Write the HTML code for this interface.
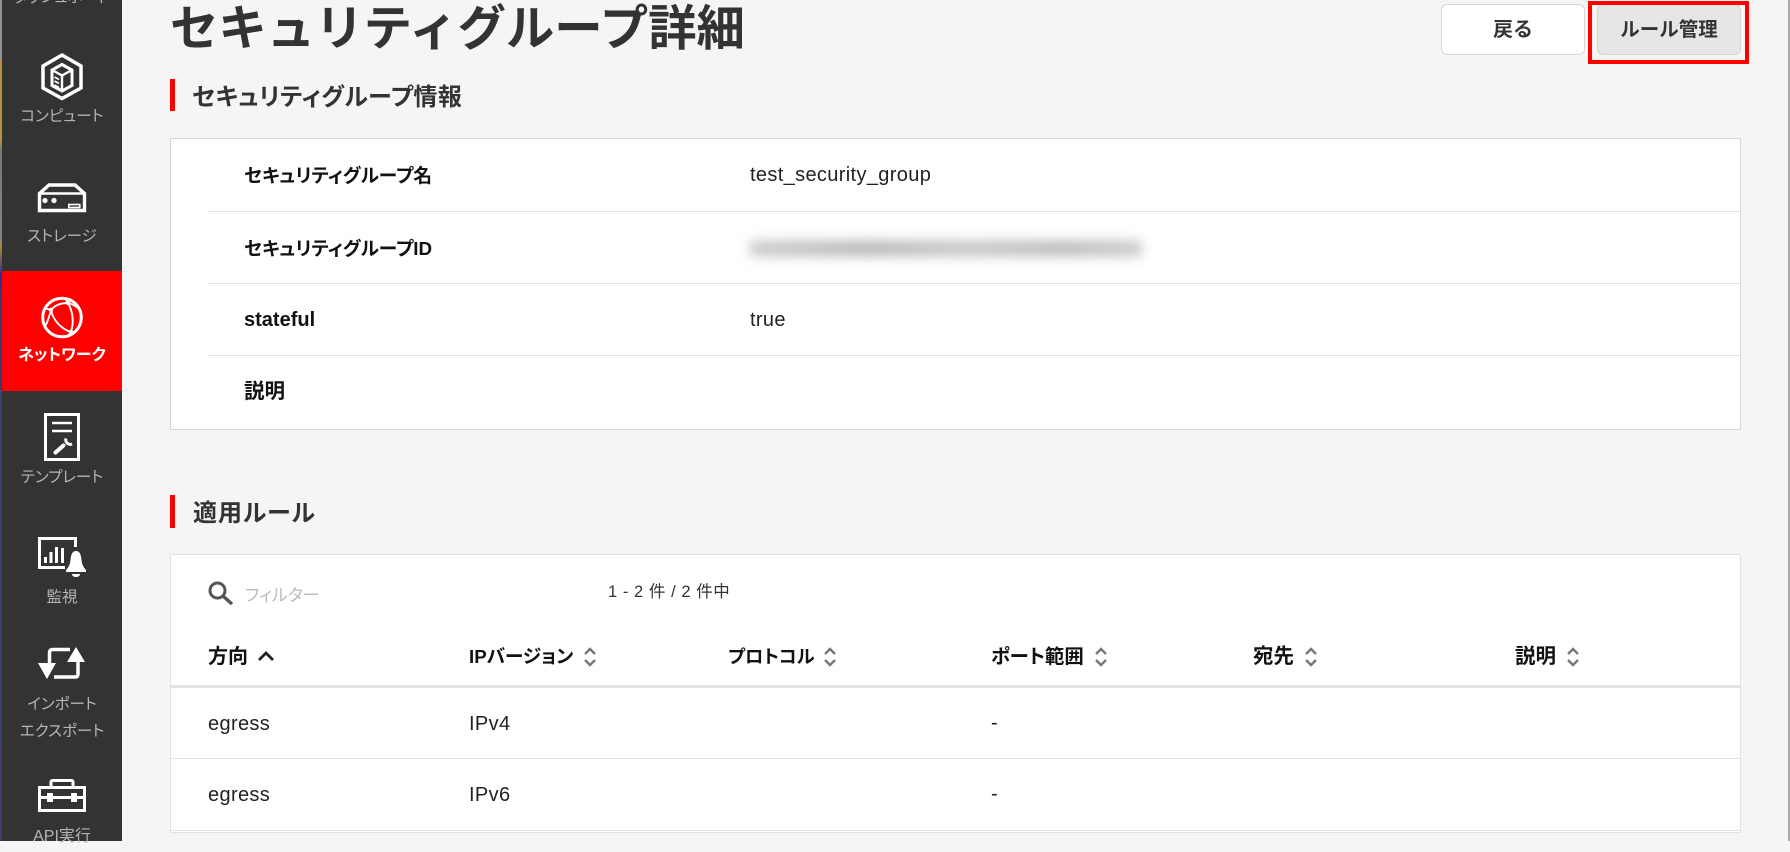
<!DOCTYPE html>
<html lang="ja"><head><meta charset="utf-8"><title>セキュリティグループ詳細</title>
<style>
html,body{margin:0;padding:0}
body{width:1790px;height:841px;overflow:hidden;position:relative;background:#f5f5f5;font-family:"Liberation Sans","Noto Sans CJK JP",sans-serif;color:#111}
.a{position:absolute;white-space:nowrap}
.t{position:absolute;white-space:nowrap;line-height:30px;height:30px}
.p{font-feature-settings:"palt"}
.s{color:#b4b4b4;font-size:15.5px;width:120px;left:2px;text-align:center;font-feature-settings:"palt"}
.b{font-weight:700;font-size:18.8px;font-feature-settings:"palt"}
.h{font-weight:700;font-size:18px;font-feature-settings:"palt";color:#111}
.v{font-size:20px;letter-spacing:.35px;color:#222}
.r{background:#e3e3e3;height:1px}
</style></head><body>
<div class="a" style="left:0;top:0;width:2px;height:841px;background:linear-gradient(#8d9296 0,#8d9296 60px,#b8923e 60px,#b8923e 140px,#777 150px,#808488 240px,#b58a30 245px,#2d2d90 275px,#36406a 300px,#3a3f6c 841px)"></div>
<div class="a" style="left:2px;top:0;width:120px;height:841px;background:#333"></div>
<div class="a" style="left:2px;top:271px;width:120px;height:120px;background:#f00"></div>
<div class="a" style="left:1788px;top:0;width:2px;height:841px;background:#aaa"></div>
<div class="t s" style="top:-17px">ダッシュボード</div>
<div class="t s" style="top:102px">コンピュート</div>
<div class="t s" style="top:222px">ストレージ</div>
<div class="t s" style="top:341px;color:#fff;font-weight:700;font-size:16px">ネットワーク</div>
<div class="t s" style="top:463px">テンプレート</div>
<div class="t s" style="top:583px">監視</div>
<div class="t s" style="top:690px">インポート</div>
<div class="t s" style="top:717px">エクスポート</div>
<div class="t s" style="top:822px;font-size:16px">API実行</div>
<svg class="a" style="left:0;top:0" width="1790" height="841" viewBox="0 0 1790 841" fill="none" stroke="#fff">
<polygon points="62,55 81,66 81,88 62,98.5 43,88 43,66" stroke-width="3.5"/>
<polygon points="62,64.5 72,70 72,85.5 62,91 52,85.5 52,70" stroke-width="3"/>
<path d="M52,70 62,75.5 72,70M62,75.5V91" stroke-width="2.4"/>
<path d="M54.5,77 59,79.5M54.5,81 59,83.5M54.5,85 59,87.5" stroke-width="1.7"/>
<path d="M39.5,193.5 49,185H75L84.5,193.5V210.5H39.5Z" stroke-width="3.4"/>
<path d="M39,193.5H85" stroke-width="2.5"/>
<circle cx="45" cy="200.5" r="2.6" fill="#fff" stroke="none"/><circle cx="54" cy="200.5" r="2.6" fill="#fff" stroke="none"/>
<rect x="68.8" y="204.5" width="11" height="3" stroke-width="1.6"/>
<circle cx="62" cy="317.5" r="19.3" stroke-width="3"/>
<path d="M51,310C55,305 61,303 68,303M68,303C73,312 74,322 71,332M51,310C53,320 61,329 71,332M68,303C72,304 76,306 80,310M68,303L65,298M51,310L44,308M51,310C50,315 48,320 46,325M71,332L67,337" stroke-width="1.9"/>
<circle cx="51" cy="310" r="2.2" fill="#fff" stroke="none"/><circle cx="68" cy="303" r="2.2" fill="#fff" stroke="none"/><circle cx="71" cy="332" r="2.2" fill="#fff" stroke="none"/>
<rect x="45.5" y="414.5" width="33" height="45" stroke-width="3"/>
<path d="M52,423H72M52,431H72" stroke-width="2.6"/>
<path d="M55.5,452.5 63.5,445.5" stroke-width="4" stroke-linecap="round"/>
<path d="M66,438.5A4.5,4.5 0 0 0 72,444" stroke-width="3"/>
<path d="M65,567.5H39.5V538.5H75.5V547" stroke-width="3"/>
<path d="M44,557H47V563H44ZM49.5,552H52.5V563H49.5ZM55,547H58V563H55ZM61,548H64V563H61Z" fill="#fff" stroke="none"/>
<path d="M76,551C72,551 71,555 70.5,560C70,565 68,568 66,570V572H86V570C84,568 82,565 81.5,560C81,555 80,551 76,551Z M72,574H80C80,576 78,577 76,577C74,577 72,576 72,574Z" fill="#fff" stroke="none"/>
<path d="M70,649.5H53Q49.5,649.5 49.5,653V663M54,677H75Q78,677 78,674V662" stroke-width="3.5"/>
<path d="M38,663H56L47,679ZM67,662H85L76,647Z" fill="#fff" stroke="none"/>
<path d="M39.5,787.5H84.5V810.5H39.5ZM51,787V782Q51,780.5 53,780.5H71Q73,780.5 73,782V787M39,797.5H85" stroke-width="3"/>
<rect x="47" y="793" width="6" height="9" fill="#fff" stroke="none"/><rect x="71" y="793" width="6" height="9" fill="#fff" stroke="none"/>
</svg>

<div class="a" style="left:170px;top:-1px;font-size:48.4px;line-height:60px;font-weight:700;color:#333">セキュリティグループ詳細</div>
<div class="a" style="left:170px;top:79px;width:5px;height:32px;background:#f00"></div>
<div class="a p" style="left:192px;top:82px;font-size:24px;letter-spacing:.5px;line-height:32px;font-weight:700;color:#333">セキュリティグループ情報</div>
<div class="a" style="left:1441px;top:4px;width:142px;height:49px;background:#fff;border:1px solid #d6d6d6;border-radius:6px;text-align:center;line-height:51px;font-size:20px;font-weight:700;color:#333">戻る</div>
<div class="a" style="left:1597px;top:4px;width:142px;height:49px;background:#e6e6e6;border:1px solid #d6d6d6;border-radius:6px;text-align:center;line-height:51px;font-size:19.5px;font-weight:700;color:#333">ルール管理</div>
<div class="a" style="left:1588px;top:1px;width:153px;height:55px;border:4px solid #f00"></div>

<div class="a" style="left:170px;top:138px;width:1569px;height:290px;background:#fff;border:1px solid #d8d8d8"></div>
<div class="a r" style="left:208px;top:211px;width:1532px"></div>
<div class="a r" style="left:208px;top:283px;width:1532px"></div>
<div class="a r" style="left:208px;top:355px;width:1532px"></div>
<div class="t b" style="left:244px;top:161px">セキュリティグループ名</div>
<div class="t b" style="left:244px;top:234px">セキュリティグループID</div>
<div class="t b" style="left:244px;top:305px;font-size:20px">stateful</div>
<div class="t b" style="left:244px;top:377px;font-size:20.5px">説明</div>
<div class="t v" style="left:750px;top:160px">test_security_group</div>
<div class="a" style="left:750px;top:241px;width:392px;height:15px;background:linear-gradient(90deg,#c8c8c8,#b4b4b4 30%,#c4c4c4 55%,#b8b8b8 80%,#c8c8c8);filter:blur(6px)"></div>
<div class="t v" style="left:750px;top:305px">true</div>

<div class="a" style="left:170px;top:495px;width:5px;height:33px;background:#f00"></div>
<div class="a p" style="left:193px;top:498px;font-size:24px;letter-spacing:1px;line-height:32px;font-weight:700;color:#333">適用ルール</div>
<div class="a" style="left:170px;top:554px;width:1569px;height:277px;background:#fff;border:1px solid #e2e2e2"></div>
<svg class="a" style="left:208px;top:581px" width="26" height="24" viewBox="0 0 26 24" fill="none" stroke="#555"><circle cx="9.5" cy="9.5" r="7.5" stroke-width="3"/><path d="M15,15 24,23" stroke-width="3.4"/></svg>
<div class="t p" style="left:245px;top:581px;font-size:17px;color:#bbb">フィルター</div>
<div class="t" style="left:608px;top:577px;font-size:16.5px;letter-spacing:.55px;color:#333">1 - 2 件 / 2 件中</div>

<div class="t h" style="left:208px;top:642px;font-size:20px">方向</div>
<svg class="a" style="left:258px;top:650px" width="16" height="12" viewBox="0 0 16 12" fill="none" stroke="#222" stroke-width="2.8"><path d="M1,10 8,3 15,10"/></svg>
<div class="t h" style="left:469px;top:642px;font-size:18.7px">IPバージョン</div>
<div class="t h" style="left:728px;top:642px;font-size:18.3px">プロトコル</div>
<div class="t h" style="left:991px;top:642px;font-size:19.4px">ポート範囲</div>
<div class="t h" style="left:1253px;top:642px;font-size:20.5px">宛先</div>
<div class="t h" style="left:1515px;top:642px;font-size:20.5px">説明</div>
<svg class="a" style="left:0;top:0" width="1790" height="841" viewBox="0 0 1790 841" fill="none" stroke="#777" stroke-width="2.4">
<path d="M585,654 590,649 595,654M585,660 590,665 595,660"/>
<path d="M825,654 830,649 835,654M825,660 830,665 835,660"/>
<path d="M1096,654 1101,649 1106,654M1096,660 1101,665 1106,660"/>
<path d="M1306,654 1311,649 1316,654M1306,660 1311,665 1316,660"/>
<path d="M1568,654 1573,649 1578,654M1568,660 1573,665 1578,660"/>
</svg>
<div class="a" style="left:171px;top:685px;width:1569px;height:3px;background:#e2e2e2"></div>
<div class="a r" style="left:171px;top:758px;width:1569px"></div>
<div class="a r" style="left:171px;top:830px;width:1569px"></div>
<div class="t v" style="left:208px;top:709px">egress</div>
<div class="t v" style="left:469px;top:709px">IPv4</div>
<div class="t v" style="left:991px;top:708px">-</div>
<div class="t v" style="left:208px;top:780px">egress</div>
<div class="t v" style="left:469px;top:780px">IPv6</div>
<div class="t v" style="left:991px;top:779px">-</div>
</body></html>
